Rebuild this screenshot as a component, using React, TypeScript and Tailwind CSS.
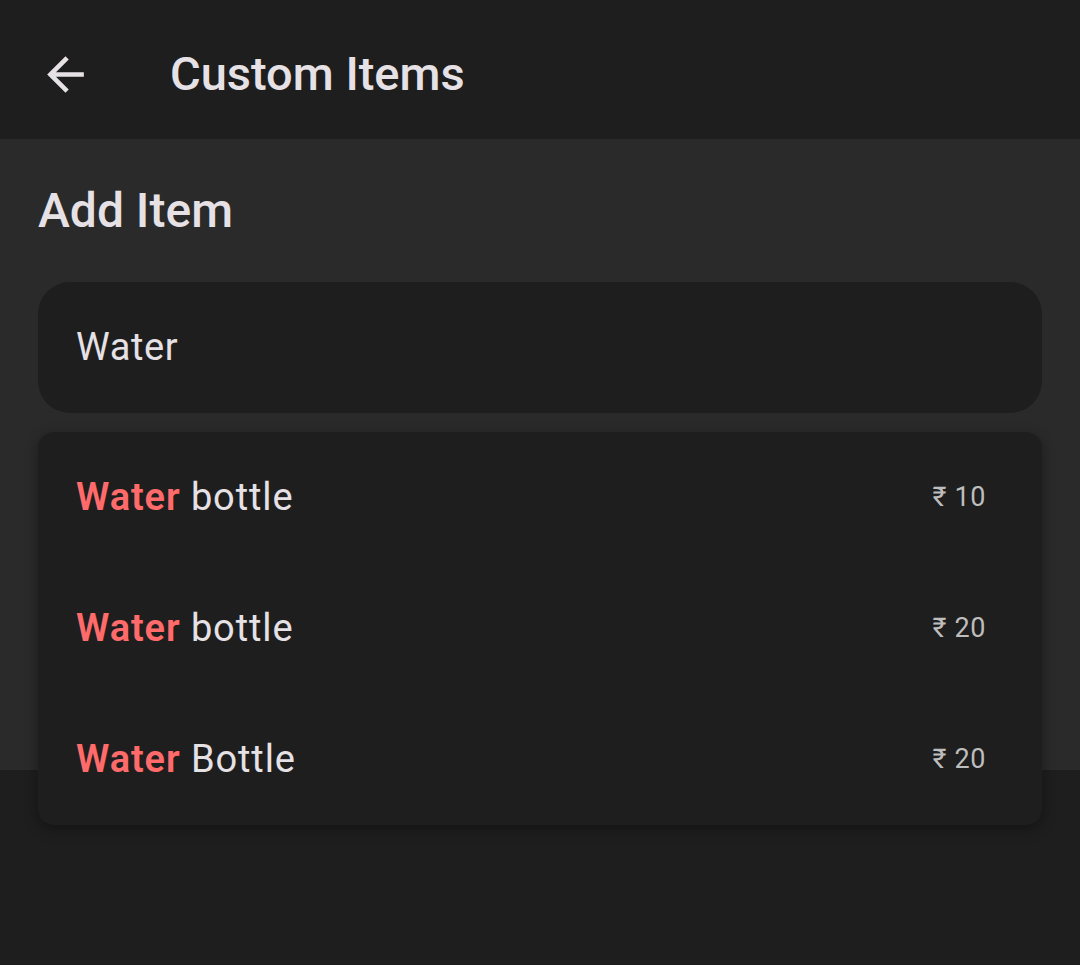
const items = [
  { rest: "bottle", price: "10" },
  { rest: "bottle", price: "20" },
  { rest: "Bottle", price: "20" },
];

function BackArrow() {
  return (
    <svg width="55" height="55" viewBox="0 0 24 24" fill="currentColor">
      <path d="M20 11H7.83l5.59-5.59L12 4l-8 8 8 8 1.41-1.41L7.83 13H20v-2z" />
    </svg>
  );
}

export default function App() {
  return (
    <div
      className="relative flex h-[965px] w-[1080px] flex-col overflow-hidden bg-[#1e1e1e] text-[#e6e1e5]"
      style={{ fontFamily: "Roboto, 'Noto Sans', sans-serif" }}
    >
      {/* Top bar */}
      <header className="flex h-[139px] shrink-0 items-center bg-[#1e1e1e]">
        <div className="mt-[9px] flex w-[170px] items-center pl-[38px]">
          <BackArrow />
        </div>
        <h1 className="pt-[10px] text-[47px] font-medium">Custom Items</h1>
      </header>

      {/* Content */}
      <main className="h-[631px] shrink-0 bg-[#2a2a2a] px-[38px]">
        <h2 className="pt-[44px] text-[48px] font-medium leading-[56px]">Add Item</h2>
        <div className="mt-[43px] flex h-[131px] items-center rounded-[32px] bg-[#1e1e1e] px-[38px]">
          <span className="text-[38px] tracking-[0.6px]">Water</span>
        </div>

        {/* Suggestions dropdown */}
        <div className="relative z-10 mt-[19px] rounded-[16px] bg-[#1e1e1e] shadow-[0_4px_14px_rgba(0,0,0,0.35)]">
          {items.map((it, i) => (
            <div key={i} className="flex h-[131px] items-center justify-between pl-[38px] pr-[56px]">
              <span className="text-[38px] tracking-[0.9px]">
                <span className="font-semibold text-[#ff6b6b]">Water</span> {it.rest}
              </span>
              <span className="text-[27px] tracking-[0.6px] text-[#bdbdbd]">₹ {it.price}</span>
            </div>
          ))}
        </div>
      </main>
    </div>
  );
}
